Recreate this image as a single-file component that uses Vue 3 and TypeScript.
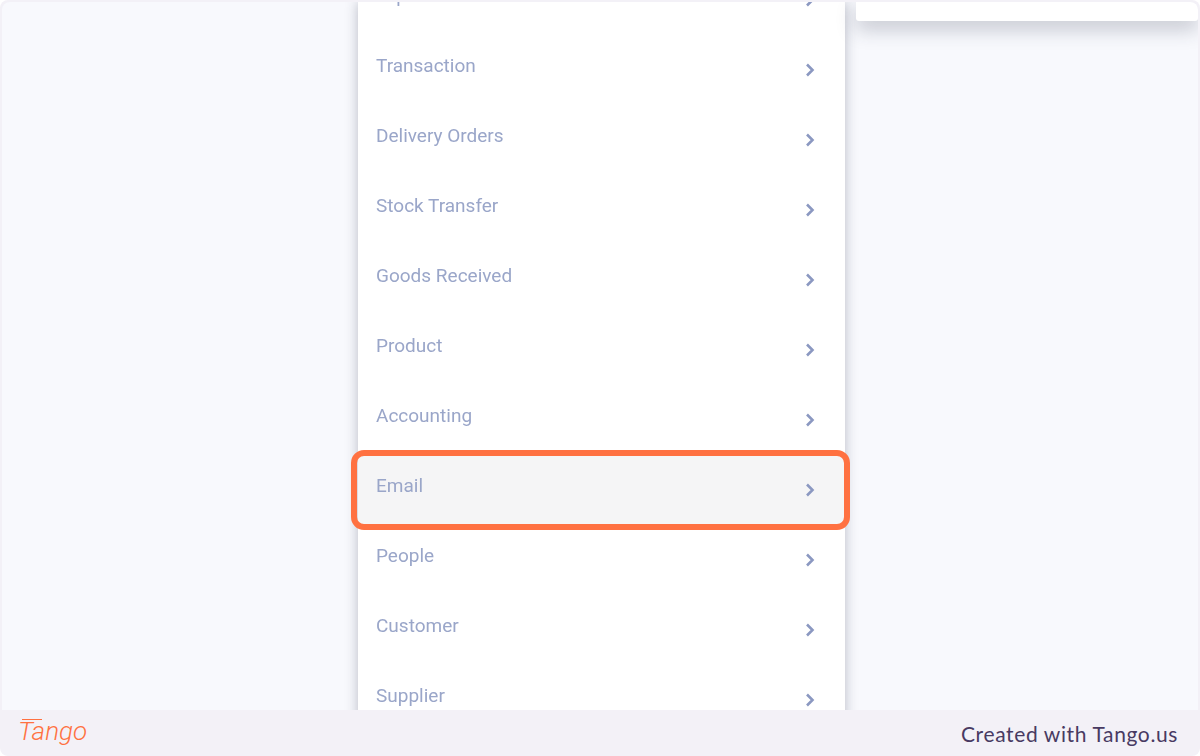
<script setup lang="ts">
interface MenuRow {
  label: string
  active?: boolean
}

const rows: MenuRow[] = [
  { label: 'Expenses' },
  { label: 'Transaction' },
  { label: 'Delivery Orders' },
  { label: 'Stock Transfer' },
  { label: 'Goods Received' },
  { label: 'Product' },
  { label: 'Accounting' },
  { label: 'Email', active: true },
  { label: 'People' },
  { label: 'Customer' },
  { label: 'Supplier' },
]
</script>

<template>
  <div class="frame">
    <div class="stage">
      <aside class="menu">
        <div class="list">
          <div v-for="row in rows" :key="row.label" class="row" :class="{ active: row.active }">
            <span class="label">{{ row.label }}</span>
            <svg class="chev" width="12" height="16" viewBox="0 0 12 16" aria-hidden="true">
              <path d="M3 2.5 L8.5 8 L3 13.5" fill="none" stroke="#8b98c1" stroke-width="2.6" />
            </svg>
            <span v-if="row.active" class="ring"></span>
          </div>
        </div>
      </aside>
      <div class="panel"></div>
    </div>
    <footer class="foot">
      <span class="logo">Tango</span>
      <span class="credit">Created with Tango.us</span>
    </footer>
  </div>
</template>

<style>
html,
body {
  margin: 0;
  background: #ffffff;
}
</style>

<style scoped>
.frame {
  width: 1200px;
  height: 756px;
  box-sizing: border-box;
  padding: 2px 2px 0;
  background: #f3f1f7;
  border-radius: 8px;
  display: flex;
  flex-direction: column;
  overflow: hidden;
}
.stage {
  height: 708px;
  flex: none;
  background: #f8f9fd;
  border-radius: 8px 8px 0 0;
  overflow: hidden;
  display: flex;
  align-items: flex-start;
}
.menu {
  width: 487px;
  height: 800px;
  margin-left: 356px;
  flex: none;
  background: #ffffff;
  box-shadow: 0 0 12px rgba(40, 45, 70, 0.3);
}
.list {
  margin-top: -38px;
}
.row {
  position: relative;
  height: 70.04px;
  display: flex;
  align-items: center;
  justify-content: space-between;
  padding: 0 29px 0 18px;
  box-sizing: border-box;
}
.row.active {
  background: #f5f5f6;
}
.label {
  font-family: Roboto, "Liberation Sans", sans-serif;
  font-size: 19px;
  color: #9aa6c9;
  position: relative;
  top: -4px;
  filter: blur(0.45px);
}
.chev {
  position: relative;
  top: 1px;
  filter: blur(0.35px);
}
.ring {
  position: absolute;
  left: -7px;
  right: -5px;
  top: -4px;
  bottom: -6px;
  border: 6px solid #ff7141;
  border-radius: 13px;
}
.panel {
  width: 342px;
  height: 19px;
  margin-left: 11px;
  flex: none;
  background: #ffffff;
  border-radius: 0 0 3px 3px;
  box-shadow: 0 8px 20px rgba(40, 45, 70, 0.26);
}
.foot {
  flex: 1;
  display: flex;
  align-items: center;
  justify-content: space-between;
  padding: 0 20px 0 16px;
}
.logo {
  position: relative;
  top: -2px;
  font-family: Roboto, "Liberation Sans", sans-serif;
  font-style: italic;
  font-weight: 300;
  font-size: 26px;
  color: #ff7141;
  line-height: 30px;
}
.logo::before {
  content: "";
  position: absolute;
  left: 4px;
  top: 3px;
  width: 20px;
  height: 1px;
  background: #ff7141;
}
.credit {
  font-family: Lato, "Liberation Sans", sans-serif;
  font-size: 21px;
  letter-spacing: 0.62px;
  color: #483a62;
}
</style>
